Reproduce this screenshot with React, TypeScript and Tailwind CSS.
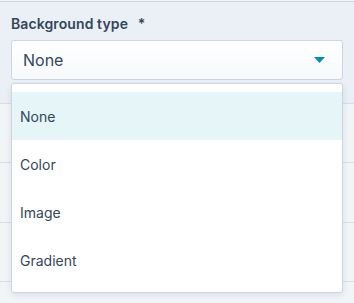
import React, { useState } from "react";

const options = ["None", "Color", "Image", "Gradient"];

export default function App(): JSX.Element {
  const [selected, setSelected] = useState<string>("None");

  return (
    <div className="relative w-[354px] h-[303px] overflow-hidden bg-[#f2f5f8] font-['Inter',sans-serif] text-[#33475b]">
      {/* field */}
      <div className="mt-px border-t border-[#cbd6e2] bg-[#eaf0f6] border-b border-b-[#d7dee6] h-[103px] px-[11px] pt-[12px]">
        <label className="block text-[14px] leading-5 font-semibold tracking-[0.1px]">
          Background type <span className="ml-[6px]">*</span>
        </label>
        <button className="mt-[6px] flex items-center justify-between w-[332px] h-10 px-[11px] rounded-[3px] border border-[#cbd6e2] bg-gradient-to-b from-white to-[#f7f9fb] text-[16px] text-[#33475b]">
          <span>{selected}</span>
          <svg width="11" height="6" viewBox="0 0 11 6" className="mr-[6px]">
            <path d="M0 0h11L5.5 6z" fill="#0091ae" />
          </svg>
        </button>
      </div>

      {/* rows under the menu */}
      <div className="h-[59px] border-b border-[#d7dee6]" />
      <div className="h-[60px] border-b border-[#d7dee6]" />
      <div className="h-[59px] border-b border-[#d7dee6]" />

      {/* open menu */}
      <ul className="absolute left-[11px] top-[83px] w-[332px] py-2 bg-white border border-[#cbd6e2] rounded-[3px] shadow-[0_2px_6px_rgba(45,62,80,0.12)]">
        {options.map((o) => (
          <li
            key={o}
            onClick={() => setSelected(o)}
            className={
              o === selected
                ? "h-12 flex items-center px-2 text-[14px] bg-[#e5f5f8]"
                : "h-12 flex items-center px-2 text-[14px]"
            }
          >
            {o}
          </li>
        ))}
      </ul>
    </div>
  );
}
